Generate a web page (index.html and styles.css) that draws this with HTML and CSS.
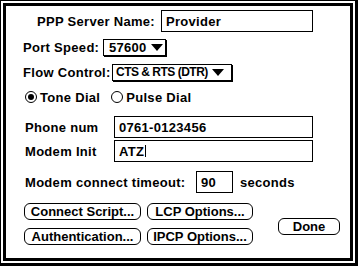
FILE: index.html
```html
<!DOCTYPE html>
<html lang="en">
<head>
    <meta charset="UTF-8">
    <title>PPP Configuration</title>
    <link rel="stylesheet" href="styles.css">
</head>
<body>
    <div class="dialog">
        <div class="frame">
            <div class="row row-server">
                <span class="lbl lbl-server">PPP Server Name:</span>
                <div class="field field-server">Provider</div>
            </div>
            <div class="row row-port">
                <span class="lbl lbl-port">Port Speed:</span>
                <div class="popup popup-port"><span>57600</span><i class="arrow"></i></div>
            </div>
            <div class="row row-flow">
                <span class="lbl lbl-flow">Flow Control:</span>
                <div class="popup popup-flow"><span>CTS &amp; RTS (DTR)</span><i class="arrow"></i></div>
            </div>
            <div class="row row-radio">
                <span class="radio checked"></span><span class="radio-text">Tone Dial</span>
                <span class="radio radio-pulse"></span><span class="radio-text">Pulse Dial</span>
            </div>
            <div class="row row-phone">
                <span class="lbl lbl-field">Phone num</span>
                <div class="field field-wide">0761-0123456</div>
            </div>
            <div class="row row-init">
                <span class="lbl lbl-field">Modem Init</span>
                <div class="field field-wide">ATZ<span class="caret"></span></div>
            </div>
            <div class="row row-timeout">
                <span class="lbl lbl-timeout">Modem connect timeout:</span>
                <div class="field field-small">90</div>
                <span class="unit">seconds</span>
            </div>
            <div class="buttons">
                <div class="btn-grid">
                    <div class="btn btn-left">Connect Script...</div>
                    <div class="btn btn-right">LCP Options...</div>
                    <div class="btn btn-left">Authentication...</div>
                    <div class="btn btn-right">IPCP Options...</div>
                </div>
                <div class="btn btn-done">Done</div>
            </div>
        </div>
    </div>
</body>
</html>
```

FILE: styles.css
```css
body {
    margin: 0;
    background-color: #fff;
    color: #000;
    font-family: "Liberation Sans", Arial, sans-serif;
    font-weight: bold;
    font-size: 13px;
    letter-spacing: 0.3px;
    white-space: nowrap;
}
.dialog {
    width: 358px;
    height: 266px;
    box-sizing: border-box;
    border: 1px solid #000;
    border-right-width: 3px;
    border-bottom-width: 3px;
    padding: 2px;
}
.frame {
    height: 100%;
    box-sizing: border-box;
    border: 3px solid #000;
    padding: 4px 0 0 17px;
}
.row {
    display: flex;
    align-items: center;
}
.row-server { height: 22px; }
.lbl-server {
    width: 132px;
    margin-right: 6px;
    text-align: right;
}
.field {
    box-sizing: border-box;
    height: 22px;
    border: 1px solid #000;
    padding-left: 4px;
    display: flex;
    align-items: center;
}
.field-server { width: 152px; }
.row-port {
    height: 18px;
    margin-top: 6px;
}
.row-flow {
    height: 18px;
    margin-top: 7px;
}
.lbl-port { width: 80px; }
.lbl-flow { width: 89px; }
.popup {
    box-sizing: border-box;
    height: 17px;
    border: 1px solid #000;
    box-shadow: 1px 1px 0 #000;
    display: flex;
    align-items: center;
    gap: 4px;
    padding-left: 5px;
}
.popup-port { width: 63px; }
.popup-flow {
    width: 120px;
    padding-left: 3px;
    font-size: 12px;
    letter-spacing: -0.5px;
}
.arrow {
    flex-shrink: 0;
    width: 0;
    height: 0;
    border-left: 6px solid transparent;
    border-right: 6px solid transparent;
    border-top: 7px solid #000;
}
.row-radio {
    height: 16px;
    margin-top: 8px;
}
.radio {
    box-sizing: border-box;
    width: 12px;
    height: 12px;
    margin-left: 2px;
    margin-right: 3px;
    border: 1px solid #000;
    border-radius: 50%;
    position: relative;
}
.radio.checked::after {
    content: "";
    position: absolute;
    left: 2px;
    top: 2px;
    width: 6px;
    height: 6px;
    border-radius: 50%;
    background-color: #000;
}
.radio-pulse { margin-left: 11px; }
.row-phone {
    height: 22px;
    margin-top: 11px;
}
.row-init {
    height: 22px;
    margin-top: 2px;
}
.lbl-field {
    width: 89px;
    padding-left: 2px;
}
.field-wide { width: 199px; }
.caret {
    display: inline-block;
    width: 1px;
    height: 12px;
    margin-left: 1px;
    background-color: #000;
}
.row-timeout {
    height: 22px;
    margin-top: 9px;
}
.lbl-timeout {
    width: 171px;
    padding-left: 2px;
}
.field-small { width: 37px; }
.unit { margin-left: 7px; }
.buttons {
    display: flex;
    margin-top: 10px;
    margin-left: 1px;
}
.btn-grid {
    display: grid;
    grid-template-columns: 117px 106px;
    column-gap: 6px;
    row-gap: 8px;
}
.btn {
    box-sizing: border-box;
    height: 17px;
    border: 1px solid #000;
    border-radius: 6px;
    display: flex;
    align-items: center;
    justify-content: center;
    letter-spacing: 0;
}
.btn-done {
    width: 62px;
    margin-left: 25px;
    margin-top: 15px;
}
```
